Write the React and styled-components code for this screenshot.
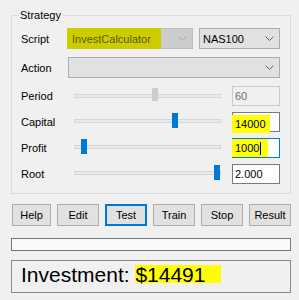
import React from 'react';
import styled, { createGlobalStyle } from 'styled-components';

const GlobalStyle = createGlobalStyle`
  html, body {
    margin: 0;
    padding: 0;
    background: #f0f0f0;
  }
  body {
    font-family: "Liberation Sans", Arial, sans-serif;
    font-size: 11px;
    color: #000;
  }
`;

const Window = styled.div`
  width: 299px;
  height: 300px;
  box-sizing: border-box;
  padding: 8px 8px 0 11px;
  display: flex;
  flex-direction: column;
`;

const GroupBox = styled.fieldset`
  margin: 0;
  padding: 6px 10px 9px 9px;
  border: 1px solid #dcdcdc;
  display: flex;
  flex-direction: column;
  min-width: 0;
`;

const Legend = styled.legend`
  padding: 0 1px;
  margin-left: -2px;
  line-height: 14px;
`;

const Row = styled.div`
  display: flex;
  align-items: center;
  height: ${(p) => p.$h || 20}px;
  margin-top: ${(p) => p.$gap || 0}px;
`;

const Label = styled.div`
  width: 47px;
  flex: none;
  line-height: 14px;
`;

const Combo = styled.div`
  box-sizing: border-box;
  width: ${(p) => p.$w}px;
  height: 21px;
  margin-right: ${(p) => p.$mr || 0}px;
  flex: none;
  display: flex;
  align-items: center;
  justify-content: space-between;
  padding: 0 5px 0 3px;
  border: 1px solid ${(p) => (p.$disabled ? '#bfbfbf' : '#adadad')};
  background: ${(p) => (p.$disabled ? '#cccccc' : '#e1e1e1')};
  color: ${(p) => (p.$disabled ? '#6d6d6d' : '#000')};
  white-space: nowrap;
  overflow: visible;
`;

const ComboMark = styled.span`
  box-sizing: border-box;
  display: inline-flex;
  align-items: center;
  width: 94px;
  height: 21px;
  margin-left: -5px;
  padding-left: 5px;
  background: #cccc00;
  color: #5c5c00;
`;

const SliderBox = styled.div`
  position: relative;
  width: 164px;
  height: 20px;
  flex: none;
`;

const Track = styled.div`
  position: absolute;
  left: 6px;
  top: ${(p) => p.$top}px;
  width: 147px;
  height: 4px;
  box-sizing: border-box;
  background: #e7eaea;
  border: 1px solid #d6d6d6;
`;

const Thumb = styled.div`
  position: absolute;
  top: ${(p) => p.$top}px;
  width: 6px;
  height: ${(p) => (p.$disabled ? 13 : 15)}px;
  background: ${(p) => (p.$disabled ? '#cccccc' : '#0078d7')};
`;

const TextBox = styled.div`
  box-sizing: border-box;
  width: 48px;
  height: 20px;
  flex: none;
  display: flex;
  align-items: center;
  padding-left: 2px;
  border: 1px solid
    ${(p) => (p.$focused ? '#0078d7' : p.$disabled ? '#cccccc' : '#7a7a7a')};
  background: ${(p) => (p.$disabled ? '#f0f0f0' : '#fff')};
  color: ${(p) => (p.$disabled ? '#6d6d6d' : '#000')};
  overflow: visible;
`;

const FieldMark = styled.span`
  box-sizing: border-box;
  display: inline-flex;
  align-items: center;
  width: ${(p) => p.$w}px;
  height: ${(p) => p.$h || 18}px;
  margin: ${(p) => p.$mt || 0}px 0 0 -3px;
  padding-left: 3px;
  background: #ffff00;
`;

const Caret = styled.span`
  display: inline-block;
  width: 1px;
  height: 13px;
  margin-left: 1px;
  background: #000;
`;

const ButtonRow = styled.div`
  display: flex;
  justify-content: space-between;
  margin: 10px 0 0 1px;
`;

const Button = styled.div`
  box-sizing: border-box;
  width: ${(p) => p.$w || 42}px;
  height: 22px;
  display: flex;
  align-items: center;
  justify-content: center;
  background: #e1e1e1;
  border: ${(p) => (p.$default ? '2px solid #0078d7' : '1px solid #adadad')};
`;

const Progress = styled.div`
  box-sizing: border-box;
  width: 280px;
  height: 13px;
  margin-top: 12px;
  border: 1px solid #767676;
  background: #fafafa;
`;

const ResultBox = styled.div`
  box-sizing: border-box;
  width: 280px;
  height: 33px;
  margin-top: 9px;
  padding-left: 9px;
  border: 1px solid #8a8a8a;
  font-size: 21px;
  line-height: 28px;
  white-space: nowrap;
`;

const BigMark = styled.span`
  padding-right: 16px;
  background: linear-gradient(#ffff00, #ffff00) no-repeat;
  background-size: 100% 18px;
  background-position: 0 2px;
`;

const Chevron = ({ color }) => (
  <svg width="9" height="5" viewBox="0 0 9 5">
    <path d="M0.5 0.5 L4.5 4.5 L8.5 0.5" fill="none" stroke={color} strokeWidth="1" />
  </svg>
);

const Slider = ({ pos, disabled, trackTop, thumbTop }) => (
  <SliderBox>
    <Track $top={trackTop} />
    <Thumb $top={thumbTop} $disabled={disabled} style={{ left: 6 + pos }} />
  </SliderBox>
);

export default function App() {
  return (
    <>
      <GlobalStyle />
      <Window>
        <GroupBox>
          <Legend>Strategy</Legend>
          <Row $h={21}>
            <Label>Script</Label>
            <Combo $w={125} $mr={6} $disabled>
              <ComboMark>InvestCalculator</ComboMark>
              <Chevron color="#a6a6a6" />
            </Combo>
            <Combo $w={81}>
              <span>NAS100</span>
              <Chevron color="#606060" />
            </Combo>
          </Row>
          <Row $h={21} $gap={8}>
            <Label>Action</Label>
            <Combo $w={212}>
              <span />
              <Chevron color="#606060" />
            </Combo>
          </Row>
          <Row $gap={8}>
            <Label>Period</Label>
            <Slider pos={78} disabled trackTop={8} thumbTop={2} />
            <TextBox $disabled>60</TextBox>
          </Row>
          <Row $gap={6}>
            <Label>Capital</Label>
            <Slider pos={98} trackTop={7} thumbTop={1} />
            <TextBox>
              <FieldMark $w={38} $h={18} $mt={3}>14000</FieldMark>
            </TextBox>
          </Row>
          <Row $gap={6}>
            <Label>Profit</Label>
            <Slider pos={7} trackTop={7} thumbTop={1} />
            <TextBox $focused>
              <FieldMark $w={36} $h={18}>1000<Caret /></FieldMark>
            </TextBox>
          </Row>
          <Row $gap={6}>
            <Label>Root</Label>
            <Slider pos={140} trackTop={7} thumbTop={1} />
            <TextBox>2.000</TextBox>
          </Row>
        </GroupBox>
        <ButtonRow>
          <Button $w={39}>Help</Button>
          <Button>Edit</Button>
          <Button $default>Test</Button>
          <Button>Train</Button>
          <Button>Stop</Button>
          <Button>Result</Button>
        </ButtonRow>
        <Progress />
        <ResultBox>
          Investment: <BigMark>$14491</BigMark>
        </ResultBox>
      </Window>
    </>
  );
}
